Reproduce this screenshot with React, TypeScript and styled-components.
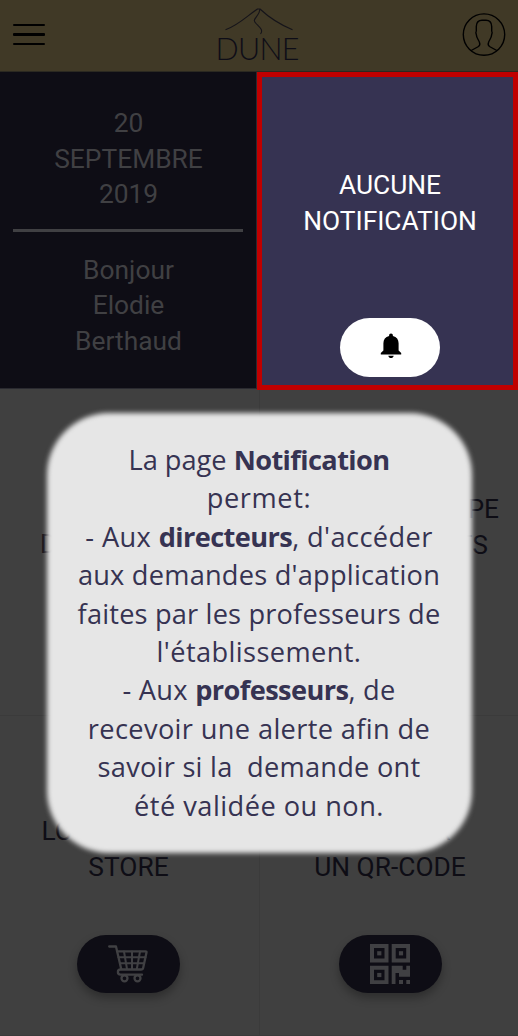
import React from "react";
import styled, { createGlobalStyle } from "styled-components";

const GlobalStyle = createGlobalStyle`
  * { box-sizing: border-box; }
  body { margin: 0; background: #404040; font-family: Roboto, "Liberation Sans", sans-serif; }
`;

const Screen = styled.main`
  position: relative;
  width: 518px;
  height: 1036px;
  display: flex;
  flex-direction: column;
  overflow: hidden;
  background: #404040;
`;

const Header = styled.header`
  flex: none;
  height: 72px;
  display: flex;
  align-items: flex-start;
  background: #403926;
  border-bottom: 1px solid #2b2921;
`;

const MenuButton = styled.div`
  display: flex;
  flex-direction: column;
  gap: 7.4px;
  width: 32px;
  margin: 23.5px 0 0 13px;
`;

const MenuBar = styled.span`
  height: 2.4px;
  border-radius: 1px;
  background: #000;
`;

const Logo = styled.svg`
  width: 90px;
  height: 66px;
  margin-left: 169px;
  text { font-family: Lato, sans-serif; font-weight: 300; font-size: 30.5px; fill: #0e0d17; }
  path { fill: none; stroke: #15141a; stroke-width: 1.1; }
`;

const Avatar = styled.svg`
  width: 44px;
  height: 44px;
  margin: 12px 12px 0 auto;
  fill: none;
  stroke: #000;
  stroke-width: 1.4;
`;

const Grid = styled.div`
  display: grid;
  grid-template-columns: 257px 261px;
  grid-template-rows: 318px 326px 320px;
`;

const DateTile = styled.section`
  display: flex;
  flex-direction: column;
  height: 317px;
  padding: 34px 12px 0 13px;
  background: #0e0d15;
  border-right: 1px solid #2a2a30;
  border-bottom: 1px solid #2a2a30;
`;

const Label = styled.p<{ $color?: string }>`
  margin: 0;
  font-size: 26.35px;
  line-height: 35.6px;
  text-align: center;
  white-space: pre-line;
  color: ${(p) => p.$color ?? "#0e0d15"};
`;

const EdgeLabel = styled(Label)<{ $align: "left" | "right"; $inset: number }>`
  text-align: ${(p) => p.$align};
  padding-${(p) => p.$align}: ${(p) => p.$inset}px;
`;

const Rule = styled.div`
  flex: none;
  height: 3px;
  margin: 16px 1px 21px 0;
  background: #404043;
`;

const NotificationTile = styled.section`
  display: flex;
  flex-direction: column;
  align-items: center;
  padding: 91px 0 0 5px;
  background: #363352;
  border: 5px solid #c00000;
`;

const Pill = styled.div<{ $light?: boolean }>`
  display: flex;
  align-items: center;
  justify-content: center;
  width: ${(p) => (p.$light ? 100 : 103)}px;
  height: ${(p) => (p.$light ? 59 : 58)}px;
  padding: ${(p) => (p.$light ? "0 0 3px 1px" : "0")};
  border-radius: 30px;
  background: ${(p) => (p.$light ? "#fff" : "#0e0d15")};
  box-shadow: ${(p) => (p.$light ? "none" : "0 5px 10px rgba(0, 0, 0, 0.3)")};
  svg { display: block; }
`;

const Tile = styled.section<{ $side: "left" | "right"; $top: number }>`
  display: flex;
  flex-direction: column;
  align-items: stretch;
  padding-top: ${(p) => p.$top}px;
  border-bottom: 1px solid #3b3b3b;
  border-right: ${(p) => (p.$side === "left" ? "1px solid #3b3b3b" : "none")};
  margin-right: ${(p) => (p.$side === "left" ? "-3px" : "0")};
  padding-left: ${(p) => (p.$side === "left" ? "0" : "5px")};
  padding-right: ${(p) => (p.$side === "left" ? "2px" : "0")};
`;

const Action = styled.div<{ $gap: number }>`
  display: flex;
  justify-content: center;
  margin-top: ${(p) => p.$gap}px;
`;

const Popup = styled.aside`
  position: absolute;
  left: 46.5px;
  top: 412.5px;
  width: 425px;
  height: 440px;
  padding-top: 28.5px;
  z-index: 1;
  &::before {
    content: "";
    position: absolute;
    inset: 0;
    z-index: -1;
    border-radius: 62px;
    background: #e6e6e6;
    filter: blur(2.8px);
  }
`;

const Line = styled.p<{ $spacing?: number }>`
  margin: 0;
  font-family: "Open Sans", sans-serif;
  font-size: 27.2px;
  line-height: 38.4px;
  letter-spacing: ${(p) => p.$spacing ?? 0}px;
  font-variant-ligatures: none;
  text-align: center;
  white-space: pre;
  color: #363352;
  b { letter-spacing: -0.6px; }
`;

const BellIcon = () => (
  <svg width="22" height="26" viewBox="0 0 22 26">
    <path d="M11 0.500c1.200 0 1.900.8 1.900 2v.4c3.800.9 5.700 3.600 5.700 7.300v7.200l2.600 2.600v1.600H.8v-1.600l2.600-2.600v-7.200C3.400 6.500 5.300 3.800 9.100 2.900v-.4c0-1.200.7-2 1.900-2z" />
    <path d="M8.300 22.700h5.400c-.3 1.400-1.400 2.400-2.700 2.400s-2.400-1-2.700-2.400z" />
  </svg>
);

const CartIcon = () => (
  <svg width="41" height="38" viewBox="0 0 41 38" fill="none" stroke="#404043" strokeWidth="2.300" strokeLinecap="round" strokeLinejoin="round">
    <path d="M1.200 1.500h6.800l5.200 22.500" />
    <path d="M9 6.300h28.500q1.200 0 1 1.200l-3.300 15.200q-.4 1.800-2.200 1.800H12.500q-2.600 0-2.600 2.600t2.600 2.600h21.500" />
    <path d="M10.500 12.200h27M12 18.300h24M16 6.500l3 17.500M24 6.500V24M32 6.500L28.800 24" strokeWidth="2" />
    <circle cx="16.500" cy="33.300" r="3" />
    <circle cx="29.500" cy="33.300" r="3" />
  </svg>
);

const QrIcon = () => (
  <svg width="40" height="40" viewBox="0 0 40 40" fill="#404043">
    {[[0, 0], [21.700, 0], [0, 21.700]].map(([x, y]) => (
      <g key={`${x}-${y}`} transform={`translate(${x} ${y})`}>
        <path fillRule="evenodd" d="M0 0h18.500v18.500H0zM4 4v10.500h10.500V4z" />
        <rect x="7.200" y="7.200" width="4.200" height="4.200" />
      </g>
    ))}
    <path d="M21.700 21.700h11v4h3.600v-4H40v11H29v-3.700h-3.500v11h-3.800z" />
    <path d="M29 36h4v4h-4zM36.300 36H40v4h-3.700z" />
  </svg>
);

export default function App() {
  return (
    <>
      <GlobalStyle />
      <Screen>
        <Header>
          <MenuButton>
            <MenuBar />
            <MenuBar />
            <MenuBar />
          </MenuButton>
          <Logo viewBox="214 0 90 66">
            <path d="M225.500 29.800C238 25.500 247 16 257.500 9H260C269 17.500 280 24.500 292.500 29.800M260 9C259.500 15 255 17 254.300 20.500C254.500 24.500 265 28.500 260.500 34" />
            <text x="215.500" y="59.500" textLength="84">DUNE</text>
          </Logo>
          <Avatar viewBox="0 0 44 44">
            <circle cx="22" cy="22.600" r="20.700" />
            <path d="M9.200 38.500L16.500 34.500Q18.500 33 17.500 30.500C16.500 27.500 14.500 26 14.300 22.500Q13.400 20.500 14.300 19V14.500Q14.500 8.300 20 8.300H24Q29.500 8.300 29.700 14.500V19Q30.600 20.500 29.700 22.500C29.500 26 27.500 27.500 26.500 30.500Q25.500 33 27.500 34.500L34.800 38.500" />
          </Avatar>
        </Header>
        <Grid>
          <DateTile>
            <Label $color="#404043">{"20\nSEPTEMBRE\n2019"}</Label>
            <Rule />
            <Label $color="#404043">{"Bonjour\nElodie\nBerthaud"}</Label>
          </DateTile>
          <NotificationTile>
            <Label $color="#fff">{"AUCUNE\nNOTIFICATION"}</Label>
            <Action $gap={78.6}>
              <Pill $light>
                <BellIcon />
              </Pill>
            </Action>
          </NotificationTile>
          <Tile $side="left" $top={137}>
            <EdgeLabel $align="left" $inset={40}>D</EdgeLabel>
          </Tile>
          <Tile $side="right" $top={102}>
            <EdgeLabel $align="right" $inset={19}>PE</EdgeLabel>
            <EdgeLabel $align="right" $inset={30}>TS</EdgeLabel>
          </Tile>
          <Tile $side="left" $top={98}>
            <EdgeLabel $align="left" $inset={41.5}>LO</EdgeLabel>
            <Label>STORE</Label>
            <Action $gap={50}>
              <Pill>
                <CartIcon />
              </Pill>
            </Action>
          </Tile>
          <Tile $side="right" $top={98}>
            <EdgeLabel $align="right" $inset={67.5}>R</EdgeLabel>
            <Label>UN QR-CODE</Label>
            <Action $gap={50}>
              <Pill>
                <QrIcon />
              </Pill>
            </Action>
          </Tile>
        </Grid>
        <Popup>
          <Line>La page <b>Notification</b></Line>
          <Line $spacing={0.6}>permet:</Line>
          <Line $spacing={0.4}>- Aux <b>directeurs</b>, d'accéder</Line>
          <Line $spacing={0.23}>aux demandes d'application</Line>
          <Line $spacing={0.18}>faites par les professeurs de</Line>
          <Line $spacing={0.4}>l'établissement.</Line>
          <Line $spacing={0.3}>- Aux <b>professeurs</b>, de</Line>
          <Line $spacing={0.37}>recevoir une alerte afin de</Line>
          <Line $spacing={0.25}>savoir si la  demande ont</Line>
          <Line $spacing={0.47}>été validée ou non.</Line>
        </Popup>
      </Screen>
    </>
  );
}
